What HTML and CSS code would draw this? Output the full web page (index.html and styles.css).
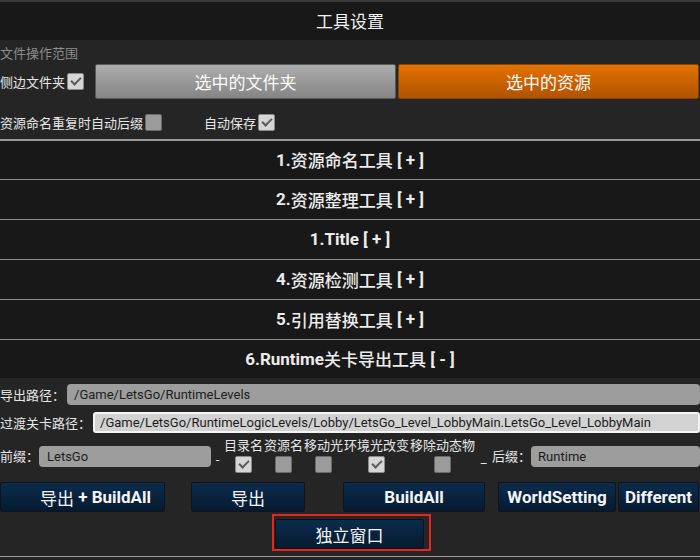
FILE: index.html
```html
<!DOCTYPE html>
<html lang="zh">
<head>
<meta charset="utf-8">
<title>工具设置</title>
<link rel="stylesheet" href="styles.css">
</head>
<body>
<div class="app">
  <div class="topline"></div>
  <div class="header">工具设置</div>
  <div class="scope-label">文件操作范围</div>
  <div class="scope-row">
    <span class="lbl">侧边文件夹</span>
    <span class="cb on"></span>
    <div class="seg grey">选中的文件夹</div>
    <div class="seg orange">选中的资源</div>
  </div>
  <div class="opts-row">
    <span class="lbl">资源命名重复时自动后缀</span>
    <span class="cb off"></span>
    <span class="lbl autosave">自动保存</span>
    <span class="cb on"></span>
  </div>
  <div class="sections">
    <div class="sec first">1.<span class="cn">资源命名工具</span>&nbsp;[ + ]</div>
    <div class="sec">2.<span class="cn">资源整理工具</span>&nbsp;[ + ]</div>
    <div class="sec">1.Title [ + ]</div>
    <div class="sec">4.<span class="cn">资源检测工具</span>&nbsp;[ + ]</div>
    <div class="sec">5.<span class="cn">引用替换工具</span>&nbsp;[ + ]</div>
    <div class="sec open">6.Runtime<span class="cn">关卡导出工具</span>&nbsp;[ - ]</div>
  </div>
  <div class="panel">
    <div class="field-row r1">
      <span class="lbl">导出路径：</span>
      <div class="input">/Game/LetsGo/RuntimeLevels</div>
    </div>
    <div class="field-row r2">
      <span class="lbl">过渡关卡路径：</span>
      <div class="input light">/Game/LetsGo/RuntimeLogicLevels/Lobby/LetsGo_Level_LobbyMain.LetsGo_Level_LobbyMain</div>
    </div>
    <div class="field-row r3">
      <span class="lbl">前缀：</span>
      <div class="input prefix">LetsGo</div>
      <span class="dash">-</span>
      <div class="opts">
        <div class="opt"><span class="optl">目录名</span><span class="cb on"></span></div>
        <div class="opt"><span class="optl">资源名</span><span class="cb off"></span></div>
        <div class="opt"><span class="optl">移动光</span><span class="cb off"></span></div>
        <div class="opt"><span class="optl">环境光改变</span><span class="cb on"></span></div>
        <div class="opt"><span class="optl">移除动态物</span><span class="cb off"></span></div>
      </div>
      <span class="under">_</span>
      <span class="lbl suffix-l">后缀：</span>
      <div class="input suffix">Runtime</div>
    </div>
    <div class="btn-row">
      <div class="btn b1"><span class="cn">导出</span>&nbsp;+ BuildAll</div>
      <div class="btn b2">导出</div>
      <div class="btn b3">BuildAll</div>
      <div class="btn b4">WorldSetting</div>
      <div class="btn b5">Different</div>
    </div>
    <div class="win-row">
      <div class="hl"><div class="btn b6">独立窗口</div></div>
    </div>
  </div>
  <div class="bottomline"></div>
</div>
</body>
</html>
```
FILE: styles.css
```css
html, body {
  margin: 0;
  padding: 0;
  background: #252525;
}
body {
  width: 700px;
  height: 560px;
  overflow: hidden;
  font-family: "Roboto", "Noto Sans CJK SC", sans-serif;
  color: #e6e6e6;
  font-size: 13px;
}
.app {
  display: flex;
  flex-direction: column;
  height: 560px;
}
.topline {
  height: 2px;
  background: #3a3a3a;
}
.header {
  height: 36px;
  padding-bottom: 2px;
  background: #181818;
  display: flex;
  align-items: center;
  justify-content: center;
  font-size: 17px;
  color: #f2f2f2;
}
.scope-label {
  height: 24px;
  line-height: 28px;
  font-size: 13px;
  color: #8c8c8c;
  white-space: nowrap;
}
.scope-row {
  height: 35px;
  display: flex;
  align-items: center;
}
.lbl {
  white-space: nowrap;
  color: #e6e6e6;
  font-size: 13px;
}
.cb {
  width: 15px;
  height: 15px;
  border-radius: 2px;
  margin-left: 2px;
  border: 1px solid #6a6a6a;
  background: #9c9c9c;
  position: relative;
  flex: none;
}
.cb.on {
  background: #d6d6d6;
  border-color: #8a8a8a;
}
.cb.on::after {
  content: "";
  position: absolute;
  left: 3px;
  top: 3px;
  width: 8px;
  height: 4px;
  border-left: 2.5px solid #5a5a5a;
  border-bottom: 2.5px solid #5a5a5a;
  transform: rotate(-45deg);
}
.seg {
  height: 33px;
  flex: 1;
  display: flex;
  align-items: center;
  justify-content: center;
  font-size: 17px;
  color: #fafafa;
  border: 1px solid #2c2c2c;
  border-radius: 2px;
}
.seg.grey {
  margin-left: 11px;
  background: linear-gradient(#adadad, #858585);
  border-color: #5a5a5a;
}
.seg.orange {
  margin-left: 2px;
  margin-right: 1px;
  background: linear-gradient(#e37200, #b05200);
  border-color: #8c4200;
}
.opts-row {
  height: 34px;
  padding-top: 6px;
  display: flex;
  align-items: center;
}
.autosave {
  margin-left: 42px;
}
.sections {
  display: flex;
  flex-direction: column;
  border-top: 2px solid #9a9a9a;
}
.sec {
  height: 38px;
  padding-bottom: 1px;
  background: #181818;
  border-top: 1px solid #8e8e8e;
  display: flex;
  align-items: center;
  justify-content: center;
  font-weight: bold;
  font-size: 17px;
  color: #ececec;
  white-space: pre;
}
.sec .cn {
  font-weight: 500;
}
.sec.first {
  border-top: none;
  height: 37px;
}
.sec.open {
  height: 37px;
}
.panel {
  display: flex;
  flex-direction: column;
  padding-top: 6px;
}
.field-row {
  display: flex;
  align-items: center;
}
.r1 {
  height: 21px;
}
.r2 {
  height: 22px;
  margin-top: 6px;
}
.r3 {
  height: 49px;
  align-items: flex-start;
}
.input {
  flex: 1;
  height: 21px;
  line-height: 21px;
  border-radius: 4px;
  background: #9d9d9d;
  color: #1c1c1c;
  font-size: 13px;
  padding-left: 7px;
  margin-left: 2px;
  white-space: nowrap;
  overflow: hidden;
  box-sizing: border-box;
}
.input.light {
  background: #d2d2d2;
  border: 2px solid #f4f4f4;
  line-height: 17px;
  border-radius: 3px;
  padding-left: 5px;
}
.r3 .lbl, .r3 .input, .r3 .dash, .r3 .under {
  margin-top: 13px;
  line-height: 21px;
}
.input.prefix {
  flex: none;
  width: 172px;
  margin-left: 0;
  padding-left: 8px;
}
.dash {
  width: 13px;
  text-align: center;
  position: relative;
  top: 3px;
}
.opts {
  display: flex;
  gap: 1px;
  margin-top: 5px;
}
.opt {
  display: flex;
  flex-direction: column;
  align-items: center;
}
.optl {
  font-size: 13px;
  line-height: 15px;
  white-space: nowrap;
}
.opt .cb {
  margin: 3px 0 0 0;
}
.under {
  width: 17px;
  text-align: center;
  position: relative;
  top: 2px;
}
.input.suffix {
  margin-left: 0;
  padding-left: 7px;
}
.btn-row {
  display: flex;
  height: 30px;
}
.btn {
  height: 30px;
  box-sizing: border-box;
  display: flex;
  align-items: center;
  justify-content: center;
  background: linear-gradient(#0b2c4d, #051a30);
  border: 1px solid #101418;
  border-radius: 2px;
  color: #f4f4f4;
  font-weight: bold;
  font-size: 17px;
  white-space: pre;
}
.btn .cn {
  font-weight: normal;
}
.b1 { width: 165px; padding-left: 26px; }
.b2 { width: 114px; margin-left: 26px; font-weight: normal; }
.b3 { width: 142px; margin-left: 38px; }
.b4 { width: 118px; margin-left: 13px; }
.b5 { width: 81px; margin-left: 2px; }
.win-row {
  display: flex;
  justify-content: center;
  margin-top: 2px;
  height: 37px;
}
.hl {
  border: 2px solid #e8251f;
  margin-left: 3px;
  width: 159px;
  height: 37px;
  box-sizing: border-box;
  padding: 3px 5px 0 1px;
}
.b6 {
  width: 149px;
  height: 30px;
  font-weight: normal;
}
.bottomline {
  margin-top: 5px;
  height: 1px;
  background: #a0a0a0;
}
```
